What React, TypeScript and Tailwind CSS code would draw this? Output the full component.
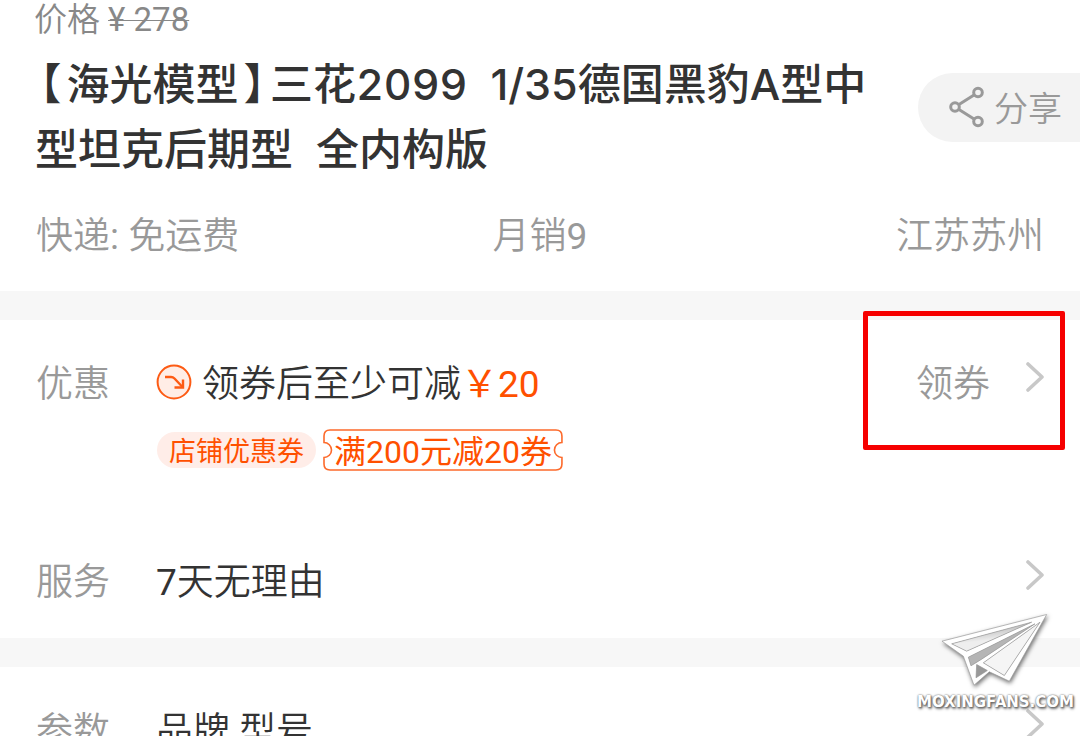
import type { ReactNode } from 'react';

const FONT = "font-['Roboto','Noto_Sans_CJK_SC',sans-serif]";
const TITLE_FONT = "font-['Inter','Noto_Sans_CJK_SC',sans-serif]";

function Chevron() {
    return (
        <svg viewBox="0 0 20 32" className="w-5 h-8 mb-4 shrink-0 text-[#c8c8c8]" fill="none" stroke="currentColor" strokeWidth="3.6" strokeLinecap="round" strokeLinejoin="round">
            <path d="M2 3 L16 16 L2 29" />
        </svg>
    );
}

function ShareIcon() {
    return (
        <svg viewBox="0 0 36 42" className="w-9 h-[42px] mb-0.5 shrink-0" fill="none" stroke="#999" strokeWidth="3">
            <circle cx="6" cy="21" r="4.3" />
            <circle cx="29" cy="6.500" r="4.3" />
            <circle cx="29" cy="35.500" r="4.3" />
            <path d="M9.600 18.700 L25.400 8.800 M9.600 23.300 L25.400 33.200" />
        </svg>
    );
}

function DiscountIcon() {
    return (
        <svg viewBox="0 0 36 36" className="size-9 mb-1.5 shrink-0" fill="none" stroke="#fd5b14" strokeWidth="2">
            <circle cx="18" cy="18" r="16.400" fill="#ffede6" />
            <path d="M9 13 H15 Q17 13 18.500 14.500 L26.500 23" strokeWidth="2.400" />
            <path d="M27 15.500 V23.500 H18.500" strokeWidth="2.400" />
        </svg>
    );
}

function Watermark() {
    return (
        <div className="absolute right-1.5 bottom-6 flex flex-col items-center pointer-events-none">
            <svg viewBox="120 210 330 230" className="w-[110px] h-[77px] mb-1 overflow-visible drop-shadow-[1px_2px_2px_rgba(0,0,0,0.55)]">
                <defs>
                    <linearGradient id="fold" x1="0" y1="0" x2="0.3" y2="1">
                        <stop offset="0" stopColor="#999" />
                        <stop offset="0.7" stopColor="#eee" />
                    </linearGradient>
                </defs>
                {/* 机翼内侧阴影 */}
                <path fill="url(#fold)" d="M155 308 L395 243 L200 330 Z" />
                <path fill="#b5b5b5" d="M205 348 L405 248 L245 354 L213 374 Z" />
                <path fill="#f5f5f5" d="M250 365 L420 243 L313 403 Z" />
                <path fill="#999" d="M230 370 L262 388 L228 410 Z" />
                <path
                    fill="#fff"
                    fillRule="evenodd"
                    stroke="#999"
                    strokeWidth="2"
                    d="M440 220 L126 300 L190 345 L222 432 L268 392 L328 420 Z M155 308 L395 243 L200 330 Z M205 348 L405 248 L245 354 L213 374 Z M250 365 L420 243 L313 403 Z M230 370 L262 388 L228 410 Z"
                />
            </svg>
            <span className="text-[15px] leading-5 font-bold text-white font-['DejaVu_Sans',sans-serif] [text-shadow:0_0_2px_#666,1px_1px_2px_#666,1px_2px_3px_#888]">
                MOXINGFANS.COM
            </span>
        </div>
    );
}

interface RowProps {
    label: string;
    children: ReactNode;
}

function Row({ label, children }: RowProps) {
    return (
        <div className="flex items-center h-12 pl-9 pr-[34px] text-[37px] leading-[48px] font-[350]">
            <span className="w-[120px] shrink-0 text-[#999]">{label}</span>
            {children}
        </div>
    );
}

export default function App() {
    return (
        <main className={`relative h-screen overflow-hidden bg-white text-[#333] ${FONT}`}>
            {/* 价格与标题 */}
            <section className="pb-[30px]">
                <p className="pl-[34px] text-[33px] leading-10 font-[350] text-[#888]">
                    价格 <del className="font-normal decoration-1">¥ 278</del>
                </p>
                <div className="flex items-start mt-3 pl-[35px]">
                    <h1 className={`flex-1 mr-7 text-[43px] leading-[65px] font-[450] whitespace-pre-wrap ${TITLE_FONT}`}>
                        <span className="px-[5px] [font-feature-settings:'halt']">【</span>
                        <span>海光模型</span>
                        <span className="px-[5px] [font-feature-settings:'halt']">】</span>
                        <span className="tabular-nums">三花2099</span>
                        <span>{'  1/35德国黑豹A型中型坦克后期型  全内构版'}</span>
                    </h1>
                    <button className="flex items-center gap-[9px] shrink-0 mt-[21px] h-[69px] pl-[31px] pr-[18px] rounded-l-full bg-[#f3f3f3] text-[34px] leading-[48px] font-[350] text-[#999]">
                        <ShareIcon />
                        <span className="pt-0.5">分享</span>
                    </button>
                </div>
                <div className="grid grid-cols-3 mt-[31px] px-9 text-[37px] leading-[48px] font-[350] text-[#999]">
                    <span>快递<span className="font-normal">: </span>免运费</span>
                    <span className="text-center">月销<span className="font-normal">9</span></span>
                    <span className="text-right">江苏苏州</span>
                </div>
            </section>

            <div className="h-[29px] bg-[#f7f7f7]" />

            {/* 优惠与服务 */}
            <section className="pt-[41px] pb-[31px]">
                <Row label="优惠">
                    <DiscountIcon />
                    <span className="ml-[10px]">领券后至少可减</span>
                    <span className="font-normal text-[#ff5000]">￥20</span>
                    <button className="flex items-center gap-9 ml-auto text-[#999]">
                        领券
                        <Chevron />
                    </button>
                </Row>
                <div className="flex items-center gap-[7px] mt-5 pl-[157px] text-[#ff5000]">
                    <span className="rounded-full bg-[#ffede8] px-3 pt-1 text-[27px] leading-8">店铺优惠券</span>
                    <span className="relative px-[11px] pt-1 text-[32px] leading-[38px]">
                        <svg viewBox="0 0 240 42" preserveAspectRatio="none" className="absolute inset-0 size-full" fill="none" stroke="#fd6a2b" strokeWidth="1.600">
                            <path d="M7 1 H233 Q239 1 239 7 V13.500 A7.500 7.500 0 0 0 239 28.500 V35 Q239 41 233 41 H7 Q1 41 1 35 V28.500 A7.500 7.500 0 0 0 1 13.500 V7 Q1 1 7 1 Z" />
                        </svg>
                        满200元减20券
                    </span>
                </div>
                <div className="mt-[88px]">
                    <Row label="服务">
                        <span><span className="font-normal">7</span>天无理由</span>
                        <button aria-label="服务" className="ml-auto"><Chevron /></button>
                    </Row>
                </div>
            </section>

            <div className="h-[29px] bg-[#f7f7f7]" />

            {/* 参数 */}
            <section className="pt-[41px]">
                <Row label="参数">
                    <span>品牌 型号</span>
                    <button aria-label="参数" className="ml-auto"><Chevron /></button>
                </Row>
            </section>

            {/* 红框标注 */}
            <div className="absolute top-[311px] right-[15px] w-[202px] h-[139px] rounded-[2px] border-[5px] border-[#f60000] pointer-events-none" />
            <Watermark />
        </main>
    );
}
